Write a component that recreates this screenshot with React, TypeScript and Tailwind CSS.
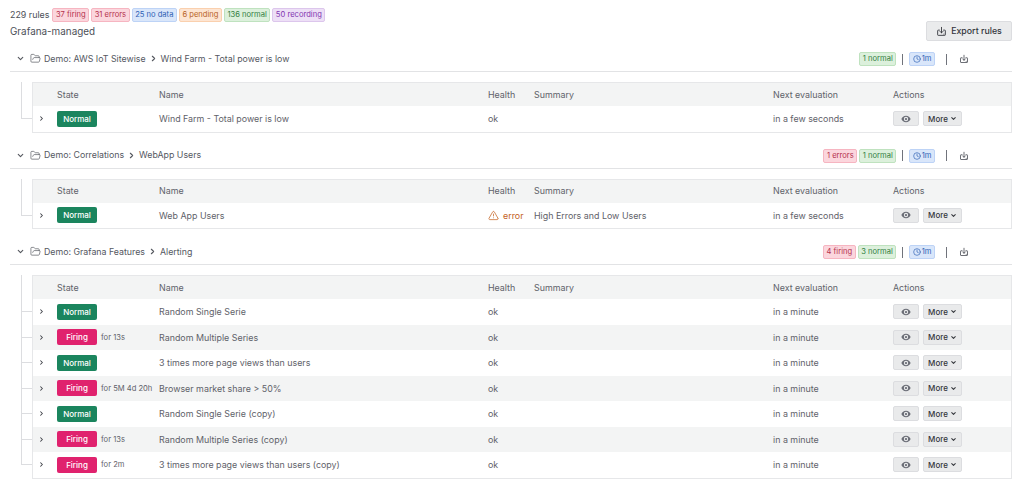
import { ChevronDown, ChevronRight, FolderOpen, AlertTriangle, Clock } from 'lucide-react'

type Rule = { state: 'Normal' | 'Firing'; time?: string; name: string; health?: string; summary?: string; next: string }

const pill = {
  red: 'bg-[#fbd6dd] border-[#f6b5c1] text-[#b5324d]',
  blue: 'bg-[#d9e6fa] border-[#bdd3f6] text-[#2f62b5]',
  orange: 'bg-[#fde5d3] border-[#fad0ae] text-[#b8621f]',
  green: 'bg-[#dcf0dc] border-[#bfe2bf] text-[#337f43]',
  purple: 'bg-[#eddff6] border-[#dcc6ec] text-[#8336b1]',
}

function Pill({ color, children }: { color: keyof typeof pill; children: React.ReactNode }) {
  return (
    <span className={`flex h-[14px] items-center gap-[1px] rounded-[2px] border px-[2.5px] text-[7.6px] whitespace-nowrap ${pill[color]}`}>
      {children}
    </span>
  )
}

function ExportIcon({ className }: { className: string }) {
  return (
    <svg className={className} viewBox="0 0 16 16" fill="none" stroke="currentColor" strokeWidth={1.3} strokeLinecap="round" strokeLinejoin="round">
      <path d="M8 2v8M5.800 7.800 8 10l2.200-2.200" />
      <path d="M5 6H3.200a.8.8 0 0 0-.8.8v6a.8.8 0 0 0 .8.8h9.600a.8.8 0 0 0 .8-.8v-6a.8.8 0 0 0-.8-.8H11" />
      <path d="M11.500 11.800h.1" />
    </svg>
  )
}

function EyeIcon() {
  return (
    <svg className="h-[10px] w-[10px] text-[#6a6d76]" viewBox="0 0 16 16" fill="currentColor">
      <path d="M8 2.800C4.500 2.800 1.700 5 .6 8c1.100 3 3.900 5.200 7.400 5.200S14.300 11 15.400 8C14.300 5 11.500 2.800 8 2.800Zm0 8.700A3.500 3.500 0 1 1 8 4.500a3.500 3.500 0 0 1 0 7Zm0-5.300A1.800 1.800 0 1 0 8 9.800a1.800 1.800 0 0 0 0-3.600Z" />
    </svg>
  )
}

const cols = 'grid grid-cols-[24px_102px_329px_46px_239px_120px_1fr] items-center'

function Group({ title, sub, pills, rules }: { title: string; sub: string; pills: React.ReactNode; rules: Rule[] }) {
  return (
    <section>
      <div className="flex h-[26px] items-center justify-between border-b border-[#e2e3e5] pl-[6px]">
        <div className="flex items-center text-[8.8px] text-[#55585f]">
          <ChevronDown className="h-[9px] w-[9px]" strokeWidth={3} />
          <FolderOpen className="ml-[5px] h-[11px] w-[11px]" strokeWidth={1.5} />
          <span className="ml-[3px]">{title}</span>
          <ChevronRight className="mx-[3px] h-[9px] w-[9px]" strokeWidth={3} />
          <span>{sub}</span>
        </div>
        <div className="mt-[1px] mr-[43px] flex items-center text-[#4c4f57]">
          <div className="flex gap-[2px]">{pills}</div>
          <span className="mx-[6px] h-[11px] w-px bg-[#70737b]" />
          <Pill color="blue">
            <Clock className="h-[8px] w-[8px]" />
            1m
          </Pill>
          <span className="ml-[11px] h-[11px] w-px bg-[#70737b]" />
          <ExportIcon className="ml-[12px] h-[10px] w-[10px]" />
        </div>
      </div>
      <div className="ml-[11px] flex pt-[10px]">
        <div className="flex w-[11px] shrink-0 flex-col">
          <div className="h-[24px] border-l border-[#dcdde0]" />
          {rules.map((r, i) => (
            <div key={r.name} className={`h-[25.5px] border-l border-[#dcdde0] ${i === rules.length - 1 ? 'border-l-0' : ''}`}>
              <div className={`h-[13px] border-b border-[#dcdde0] ${i === rules.length - 1 ? 'border-l' : ''}`} />
            </div>
          ))}
        </div>
        <div className="flex-1 border border-[#e6e7e9] text-[8.9px] text-[#5f626a]">
          <div className={`${cols} h-[23px] bg-[#f3f4f4]`}>
            <span />
            <span>State</span>
            <span>Name</span>
            <span>Health</span>
            <span>Summary</span>
            <span>Next evaluation</span>
            <span>Actions</span>
          </div>
          {rules.map((r, i) => (
            <div key={r.name} className={`${cols} h-[25.5px] ${i % 2 === 1 ? 'bg-[#f3f4f4]' : 'bg-white'}`}>
              <ChevronRight className="ml-[5px] h-[7px] w-[7px] text-[#3e4047]" strokeWidth={3.5} />
              <div className="flex items-center">
                <span className={`flex h-[16px] w-[40px] shrink-0 items-center justify-center rounded-[2px] text-[8px] font-medium text-white ${r.state === 'Normal' ? 'bg-[#1b855e]' : 'bg-[#e0226e]'}`}>
                  {r.state}
                </span>
                {r.time && <span className="ml-[4px] text-[7.6px] whitespace-nowrap">for {r.time}</span>}
              </div>
              <span className="whitespace-nowrap">{r.name}</span>
              {r.health === 'error' ? (
                <span className="flex items-center gap-[4px] text-[#c4611f]">
                  <AlertTriangle className="h-[11px] w-[11px] shrink-0" strokeWidth={1.6} />
                  error
                </span>
              ) : (
                <span>ok</span>
              )}
              <span>{r.summary}</span>
              <span>{r.next}</span>
              <div className="flex gap-[4px]">
                <button className="flex h-[15px] w-[26px] items-center justify-center rounded-[2px] border border-[#dcdde0] bg-[#e9eaeb]">
                  <EyeIcon />
                </button>
                <button className="flex h-[15px] w-[39px] items-center justify-center gap-[2px] rounded-[2px] border border-[#dcdde0] bg-[#e9eaeb] text-[8px] font-medium text-[#34363c]">
                  More
                  <ChevronDown className="h-[7px] w-[7px]" strokeWidth={3.5} />
                </button>
              </div>
            </div>
          ))}
        </div>
      </div>
    </section>
  )
}

const features: Rule[] = [
  { state: 'Normal', name: 'Random Single Serie', next: 'in a minute' },
  { state: 'Firing', time: '13s', name: 'Random Multiple Series', next: 'in a minute' },
  { state: 'Normal', name: '3 times more page views than users', next: 'in a minute' },
  { state: 'Firing', time: '5M 4d 20h', name: 'Browser market share > 50%', next: 'in a minute' },
  { state: 'Normal', name: 'Random Single Serie (copy)', next: 'in a minute' },
  { state: 'Firing', time: '13s', name: 'Random Multiple Series (copy)', next: 'in a minute' },
  { state: 'Firing', time: '2m', name: '3 times more page views than users (copy)', next: 'in a minute' },
]

export default function App() {
  return (
    <div className="h-[486px] overflow-hidden bg-white pr-[12px] pl-[10px] font-['Inter',sans-serif] text-[#4c4f57]">
      <div className="flex items-center gap-[3px] pt-[8px]">
        <span className="text-[8.9px]">229 rules</span>
        <div className="flex gap-[2px]">
          <Pill color="red">37 firing</Pill>
          <Pill color="red">31 errors</Pill>
          <Pill color="blue">25 no data</Pill>
          <Pill color="orange">6 pending</Pill>
          <Pill color="green">136 normal</Pill>
          <Pill color="purple">50 recording</Pill>
        </div>
      </div>
      <div className="flex h-[22px] items-start justify-between">
        <h2 className="pt-[2px] text-[9.9px] leading-[14px]">Grafana-managed</h2>
        <button className="-mt-[1px] flex h-[20px] w-[86px] items-center justify-center gap-[4px] rounded-[2px] border border-[#dcdde0] bg-[#eaebec] text-[8.8px] font-medium text-[#34363c]">
          <ExportIcon className="h-[11px] w-[11px]" />
          Export rules
        </button>
      </div>
      <div className="flex flex-col gap-[10px] pt-[2px]">
        <Group
          title="Demo: AWS IoT Sitewise"
          sub="Wind Farm - Total power is low"
          pills={<Pill color="green">1 normal</Pill>}
          rules={[{ state: 'Normal', name: 'Wind Farm - Total power is low', health: 'ok', next: 'in a few seconds' }]}
        />
        <Group
          title="Demo: Correlations"
          sub="WebApp Users"
          pills={
            <>
              <Pill color="red">1 errors</Pill>
              <Pill color="green">1 normal</Pill>
            </>
          }
          rules={[{ state: 'Normal', name: 'Web App Users', health: 'error', summary: 'High Errors and Low Users', next: 'in a few seconds' }]}
        />
        <Group
          title="Demo: Grafana Features"
          sub="Alerting"
          pills={
            <>
              <Pill color="red">4 firing</Pill>
              <Pill color="green">3 normal</Pill>
            </>
          }
          rules={features}
        />
      </div>
    </div>
  )
}
